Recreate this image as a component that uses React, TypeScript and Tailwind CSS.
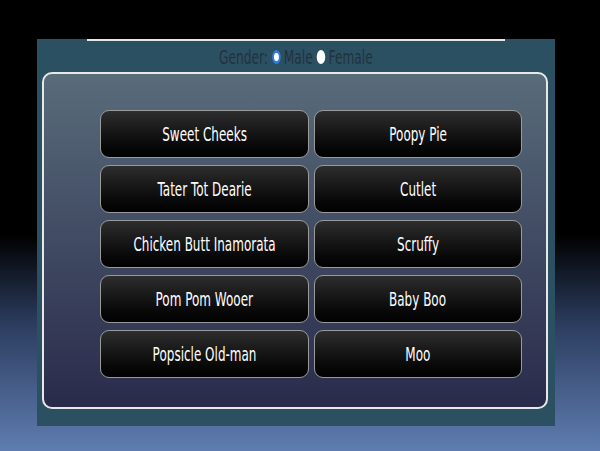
import React from 'react';

const names: string[] = [
  'Sweet Cheeks',
  'Poopy Pie',
  'Tater Tot Dearie',
  'Cutlet',
  'Chicken Butt Inamorata',
  'Scruffy',
  'Pom Pom Wooer',
  'Baby Boo',
  'Popsicle Old-man',
  'Moo',
];

const NameButton: React.FC<{ label: string }> = ({ label }) => (
  <button className="h-[48px] rounded-[9px] border border-[#9a9a9a] bg-gradient-to-b from-[#2e2e2e] to-[#020202] text-white text-[20px] flex items-center justify-center overflow-hidden">
    <span className="inline-block whitespace-nowrap scale-x-[0.6]">{label}</span>
  </button>
);

export default function App() {
  return (
    <div
      className="w-[600px] h-[451px] overflow-hidden bg-[linear-gradient(to_bottom,#000_0%,#000_52%,#2c3d5f_72%,#5f7db1_100%)] pt-[39px] pl-[37px] font-['DejaVu_Sans',sans-serif]"
    >
      <div className="w-[518px] h-[387px] bg-[#2b5062] flex flex-col">
        <div className="mx-[50px] h-[2px] bg-[#e6e6e6]" />
        <div className="h-[31px] flex items-center justify-center">
          <div className="flex items-center gap-[5px] text-[20px] text-[#22323d] whitespace-nowrap scale-x-[0.61]">
            <span>Gender:</span>
            <span className="w-[14px] h-[14px] rounded-full bg-white border-[3px] border-[#2f7de1] ml-[2px]" />
            <span>Male</span>
            <span className="w-[14px] h-[14px] rounded-full bg-white ml-[2px]" />
            <span>Female</span>
          </div>
        </div>
        <div className="ml-[5px] w-[506px] h-[337px] rounded-[10px] border-2 border-[#e8e8e8] bg-gradient-to-b from-[#596c7a] to-[#2a2b4b] pt-[36px] pl-[56px] pr-[24px]">
          <div className="grid grid-cols-2 gap-x-[5px] gap-y-[7px]">
            {names.map((n) => (
              <NameButton key={n} label={n} />
            ))}
          </div>
        </div>
      </div>
    </div>
  );
}
